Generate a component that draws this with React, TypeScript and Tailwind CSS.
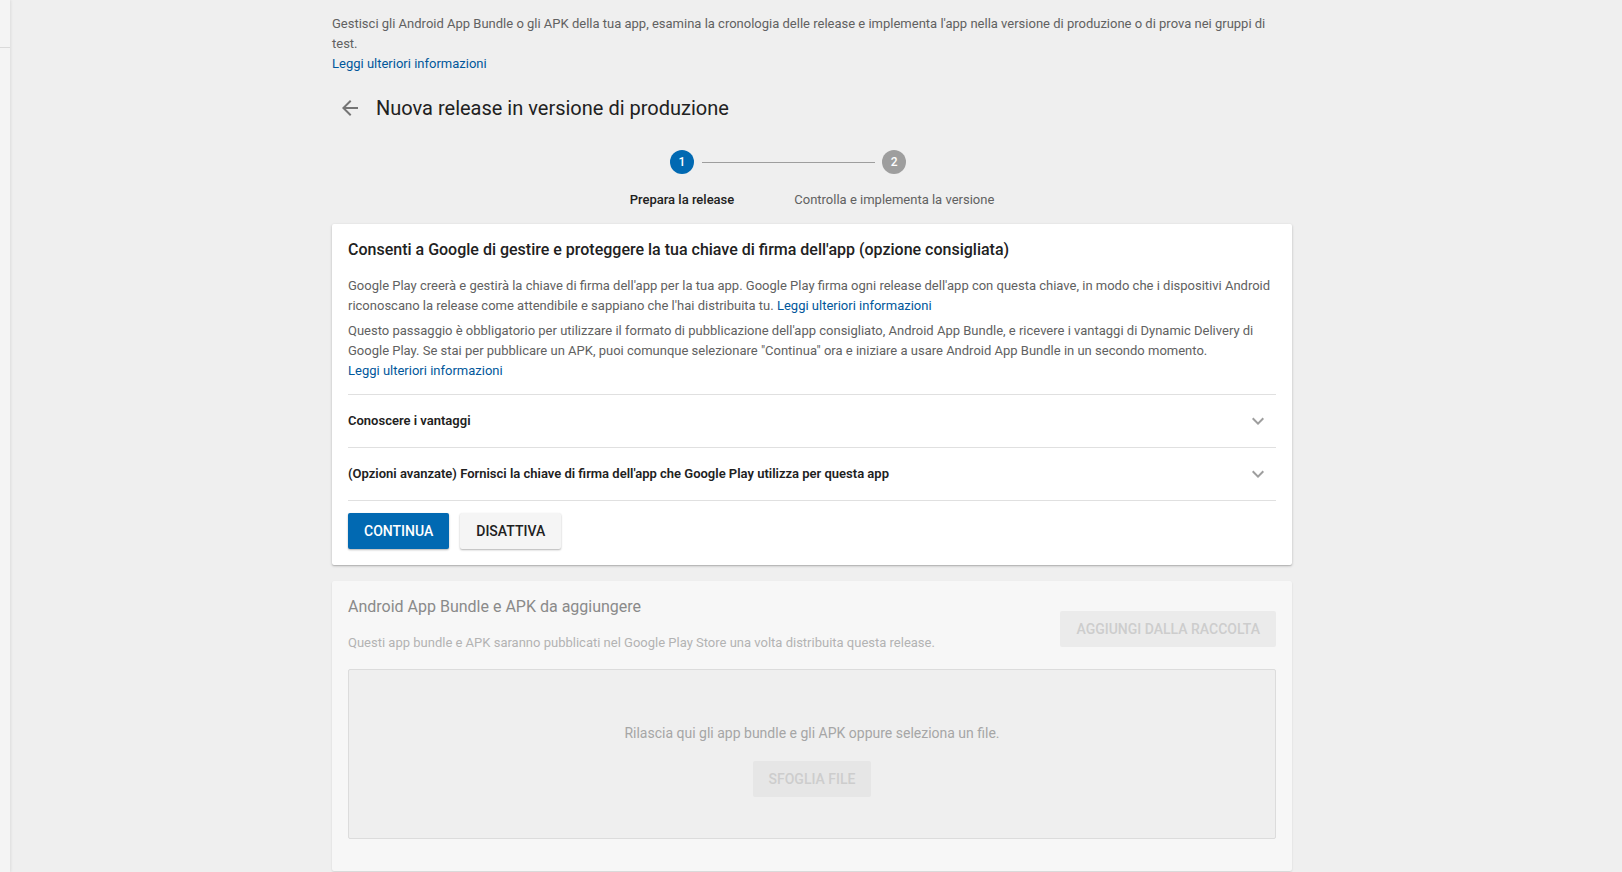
function ExpandMore() {
  return (
    <svg width="24" height="24" viewBox="0 0 24 24" className="fill-[#9e9e9e]">
      <path d="M16.59 8.59L12 13.17 7.41 8.59 6 10l6 6 6-6z" />
    </svg>
  );
}

function BackArrow() {
  return (
    <svg width="24" height="24" viewBox="0 0 24 24" className="fill-[#757575]">
      <path d="M20 11H7.83l5.59-5.59L12 4l-8 8 8 8 1.41-1.41L7.83 13H20v-2z" />
    </svg>
  );
}

const ROWS = [
  "Conoscere i vantaggi",
  "(Opzioni avanzate) Fornisci la chiave di firma dell'app che Google Play utilizza per questa app",
];

export default function App() {
  return (
    <div className="flex min-h-screen bg-[#efefef] font-['Roboto',sans-serif] text-[13px] leading-[20px] text-[#616161]">
      {/* sidebar edge */}
      <aside className="w-[10px] shrink-0 bg-[#f4f4f4] shadow-[1px_0_3px_rgba(0,0,0,0.08)]">
        <div className="h-[48px] border-b border-[#dadada]" />
      </aside>

      <main className="ml-[322px] w-[960px] shrink-0 pt-[14px]">
        <p>
          Gestisci gli Android App Bundle o gli APK della tua app, esamina la cronologia delle release e
          implementa l'app nella versione di produzione o di prova nei gruppi di test.
        </p>
        <a className="block text-[#01579b]">Leggi ulteriori informazioni</a>

        {/* title */}
        <div className="mt-4 flex h-9 items-center gap-2">
          <button className="flex h-9 w-9 items-center justify-center">
            <BackArrow />
          </button>
          <h1 className="text-[20px] leading-7 text-[#212121]">Nuova release in versione di produzione</h1>
        </div>

        {/* stepper */}
        <div className="mt-6 flex justify-center gap-[60px]">
          <div className="relative flex flex-col items-center">
            <div className="flex h-6 w-6 items-center justify-center rounded-full bg-[#0169b2] text-[12px] font-medium text-white">
              1
            </div>
            <div className="absolute left-[calc(50%+20px)] top-[11.5px] h-px w-[173px] bg-[#9e9e9e]" />
            <span className="mt-4 font-medium text-[#212121]">Prepara la release</span>
          </div>
          <div className="flex flex-col items-center">
            <div className="flex h-6 w-6 items-center justify-center rounded-full bg-[#9e9e9e] text-[12px] font-medium text-white">
              2
            </div>
            <span className="mt-4 text-[#616161]">Controlla e implementa la versione</span>
          </div>
        </div>

        {/* signing card */}
        <section className="mt-[14px] rounded-[2px] bg-white px-4 pt-4 pb-4 shadow-[0_1px_3px_rgba(0,0,0,0.2),0_1px_1px_rgba(0,0,0,0.12)]">
          <h2 className="text-[16px] font-medium leading-5 text-[#212121]">
            Consenti a Google di gestire e proteggere la tua chiave di firma dell'app (opzione consigliata)
          </h2>
          <p className="mt-4">
            Google Play creerà e gestirà la chiave di firma dell'app per la tua app. Google Play firma ogni release
            dell'app con questa chiave, in modo che i dispositivi Android riconoscano la release come attendibile e
            sappiano che l'hai distribuita tu. <a className="text-[#01579b]">Leggi ulteriori informazioni</a>
          </p>
          <p className="mt-[5px]">
            Questo passaggio è obbligatorio per utilizzare il formato di pubblicazione dell'app consigliato, Android
            App Bundle, e ricevere i vantaggi di Dynamic Delivery di Google Play. Se stai per pubblicare un APK, puoi
            comunque selezionare "Continua" ora e iniziare a usare Android App Bundle in un secondo momento.
          </p>
          <a className="block text-[#01579b]">Leggi ulteriori informazioni</a>

          <div className="mt-[13px] border-t border-[#e0e0e0]">
            {ROWS.map((label) => (
              <div key={label} className="flex h-[53px] items-center justify-between border-b border-[#e0e0e0]">
                <span className="font-semibold text-[#212121]">{label}</span>
                <span className="flex h-9 w-9 items-center justify-center">
                  <ExpandMore />
                </span>
              </div>
            ))}
          </div>

          <div className="mt-3 flex gap-[11px]">
            <button className="h-9 rounded-[2px] bg-[#0169b2] px-4 text-[14px] font-medium text-white shadow-[0_1px_2px_rgba(0,0,0,0.3)]">
              CONTINUA
            </button>
            <button className="h-9 rounded-[2px] bg-[#f5f5f5] px-4 text-[14px] font-medium text-[#212121] shadow-[0_1px_2px_rgba(0,0,0,0.3)]">
              DISATTIVA
            </button>
          </div>
        </section>

        {/* bundles card (disabled) */}
        <section className="mt-4 rounded-[2px] bg-[#f7f7f7] px-4 pt-4 pb-8 shadow-[0_1px_2px_rgba(0,0,0,0.12)]">
          <div className="flex items-start justify-between">
            <div>
              <h2 className="text-[16px] leading-5 text-[#8a8a8a]">Android App Bundle e APK da aggiungere</h2>
              <p className="mt-4 text-[#b3b3b3]">
                Questi app bundle e APK saranno pubblicati nel Google Play Store una volta distribuita questa release.
              </p>
            </div>
            <button className="mt-[14px] h-9 rounded-[2px] bg-[#ebebeb] px-4 text-[14px] font-medium text-[#cdcdcd]">
              AGGIUNGI DALLA RACCOLTA
            </button>
          </div>

          <div className="mt-4 flex h-[170px] flex-col items-center rounded-[2px] border border-[#dcdcdc] bg-[#efefef] pt-[53px]">
            <span className="text-[14px] text-[#a6a6a6]">
              Rilascia qui gli app bundle e gli APK oppure seleziona un file.
            </span>
            <button className="mt-[18px] h-9 rounded-[2px] bg-[#e6e6e6] px-4 text-[14px] font-medium text-[#cdcdcd]">
              SFOGLIA FILE
            </button>
          </div>
        </section>
      </main>
    </div>
  );
}
